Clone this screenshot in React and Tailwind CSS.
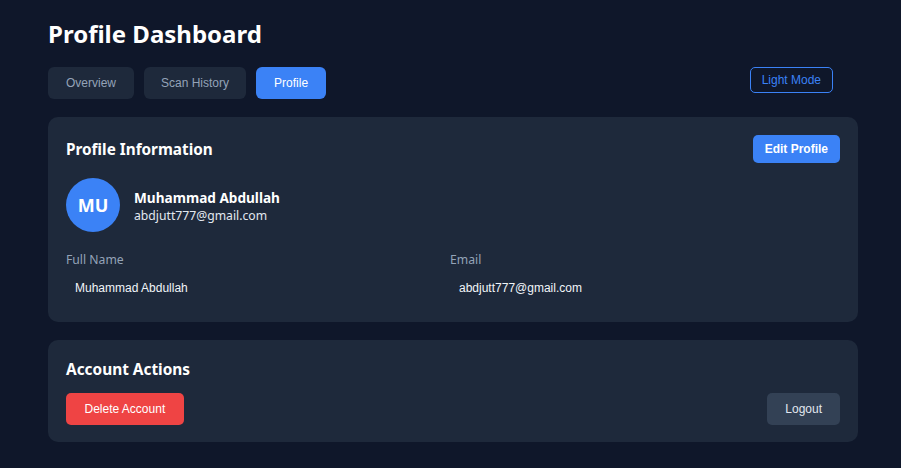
export default function App() {
  const ui = { fontFamily: '"Noto Sans", "Open Sans", sans-serif' };
  const arial = { fontFamily: '"Liberation Sans", Arial, sans-serif' };
  return (
    <div className="min-h-[468px] w-full bg-[#0f172a] pl-12 pr-[43px] pt-[18px] pb-6" style={ui}>
      <h1 className="text-[24px] leading-8 font-bold text-white">Profile Dashboard</h1>
      <div className="mt-[17px] flex items-start justify-between">
        <div className="flex gap-[10px]" style={arial}>
          <button className="h-8 rounded-md bg-[#1e293b] px-[18px] text-[12px] text-[#94a3b8]">Overview</button>
          <button className="h-8 rounded-md bg-[#1e293b] px-[17px] text-[12px] text-[#94a3b8]">Scan History</button>
          <button className="h-8 rounded-md bg-[#3b82f6] px-[18px] text-[12px] text-white">Profile</button>
        </div>
        <button className="mr-[25px] h-[26px] rounded-[5px] border border-[#3b82f6] px-[11px] text-[12px] text-[#3b82f6]" style={arial}>Light Mode</button>
      </div>

      <div className="mt-[18px] rounded-[10px] bg-[#1e293b] px-[18px] pt-[18px] pb-[20px]">
        <div className="flex items-center justify-between">
          <h2 className="text-[15.3px] font-bold text-white">Profile Information</h2>
          <button className="h-7 rounded-[5px] bg-[#3b82f6] px-[12px] text-[12px] font-bold text-white" style={arial}>Edit Profile</button>
        </div>
        <div className="mt-[15px] flex items-center gap-[14px]">
          <div className="flex h-[54px] w-[54px] items-center justify-center rounded-full bg-[#3b82f6] text-[18px] font-bold text-white">MU</div>
          <div className="flex flex-col pt-[4px]">
            <span className="text-[13.6px] leading-[18px] font-bold text-white">Muhammad Abdullah</span>
            <span className="text-[12.2px] leading-[18px] text-[#e2e8f0]">abdjutt777@gmail.com</span>
          </div>
        </div>
        <div className="mt-[18px] grid grid-cols-[384px_1fr]">
          <div>
            <div className="text-[12.2px] leading-5 text-[#94a3b8]">Full Name</div>
            <div className="mt-[4px] px-[9px] py-[6px] text-[12px] leading-[16px] text-[#f1f5f9]" style={arial}>Muhammad Abdullah</div>
          </div>
          <div>
            <div className="text-[12.2px] leading-5 text-[#94a3b8]">Email</div>
            <div className="mt-[4px] px-[9px] py-[6px] text-[12px] leading-[16px] text-[#f1f5f9]" style={arial}>abdjutt777@gmail.com</div>
          </div>
        </div>
      </div>

      <div className="mt-[18px] rounded-[10px] bg-[#1e293b] px-[18px] pt-[18px] pb-[17px]">
        <h2 className="text-[15.4px] leading-6 font-bold text-white">Account Actions</h2>
        <div className="mt-[11px] flex items-center justify-between" style={arial}>
          <button className="h-8 rounded-[5px] bg-[#ef4444] px-[18.5px] text-[12px] text-white">Delete Account</button>
          <button className="h-8 rounded-[5px] bg-[#334155] px-[18px] text-[12px] text-[#e2e8f0]">Logout</button>
        </div>
      </div>
    </div>
  );
}
